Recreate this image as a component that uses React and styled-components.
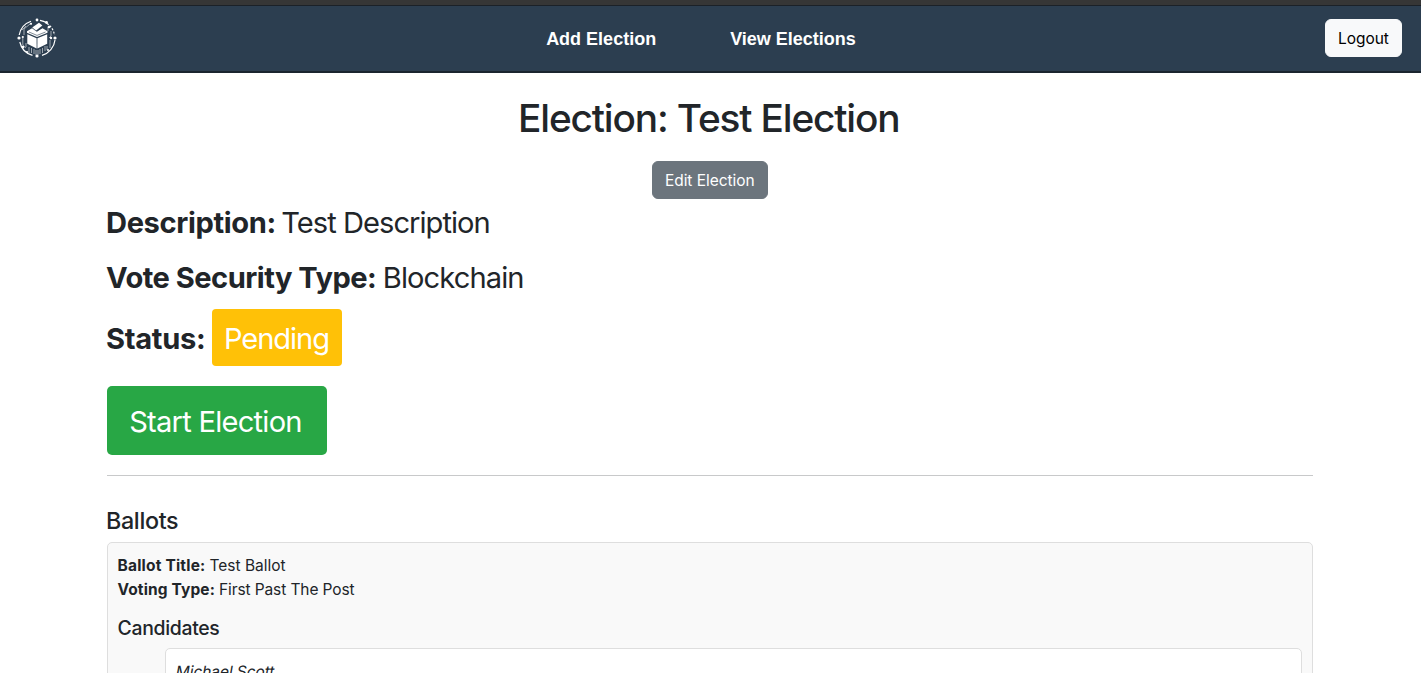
import React from "react";
import styled, { createGlobalStyle } from "styled-components";

const GlobalStyle = createGlobalStyle`
  *, *::before, *::after { box-sizing: border-box; }
  html, body { margin: 0; padding: 0; }
  body {
    height: 673px;
    overflow: hidden;
    background: #fff;
    color: #212529;
    font-family: Inter, "Liberation Sans", sans-serif;
    font-size: 15.5px;
    line-height: 24px;
    white-space: nowrap;
  }
`;

const Page = styled.div`
  height: 673px;
  overflow: hidden;
`;

const TopStrip = styled.div`
  height: 6px;
  background: #363636;
  border-bottom: 1px solid #1b2128;
`;

const NavBar = styled.nav`
  display: grid;
  grid-template-columns: 1fr auto 1fr;
  align-items: center;
  height: 67px;
  padding: 0 19px 2px 17px;
  background: #2c3e50;
  border-bottom: 2px solid #1a252f;
`;

const NavLinks = styled.div`
  display: flex;
  gap: 74px;
  padding-top: 3px;
  margin-right: 17px;
`;

const NavLink = styled.a`
  color: #fff;
  font: bold 18px/27px "Liberation Sans", Arial, sans-serif;
`;

const Button = styled.button`
  width: ${(p) => p.$width};
  height: 38px;
  padding: 2px 0 0;
  justify-self: end;
  border: 1px solid ${(p) => p.$bg};
  border-radius: 6px;
  background: ${(p) => p.$bg};
  color: ${(p) => p.$color};
  font: 400 15.5px/24px Inter, sans-serif;
  letter-spacing: -0.05px;
`;

const LogoSvg = styled.svg`
  display: block;
  width: 40px;
  height: 40px;
`;

const Content = styled.main`
  display: flex;
  flex-direction: column;
  padding: 21px 108px 0 106.5px;
`;

const Title = styled.h1`
  margin: 0 0 19px;
  padding-right: 2px;
  text-align: center;
  font-weight: 500;
  font-size: 38.8px;
  line-height: 48px;
  letter-spacing: -1.15px;
`;

const EditRow = styled.div`
  display: flex;
  justify-content: center;
`;

const Detail = styled.p`
  display: flex;
  align-items: center;
  gap: ${(p) => p.$gap || "7px"};
  margin: ${(p) => p.$margin || "0"};
  font-size: 29.1px;
  line-height: 45px;
`;

const Label = styled.strong`
  margin-left: -0.5px;
  padding-top: ${(p) => p.$drop || "0"};
  font-weight: 700;
  letter-spacing: ${(p) => p.$track || "0"};
`;

const Value = styled.span`
  letter-spacing: ${(p) => p.$track || "0"};
`;

const Badge = styled.span`
  width: 130px;
  height: 57px;
  margin-left: -0.5px;
  padding: 7px 0 0 12px;
  border-radius: 4px;
  background: #ffc107;
  color: #fff;
  letter-spacing: -1.05px;
`;

const StartButton = styled.button`
  width: 220px;
  height: 69px;
  margin-top: 20px;
  padding: 2px 2px 0 0;
  border: 0;
  border-radius: 5px;
  background: #28a745;
  color: #fff;
  font: 400 29.1px/45px Inter, sans-serif;
  letter-spacing: -0.75px;
`;

const Divider = styled.hr`
  width: 100%;
  height: 1px;
  margin: 20px 0 30px;
  border: 0;
  background: #c8c9ca;
`;

const SectionTitle = styled.h2`
  margin: 0 0 7px -0.5px;
  font-weight: 500;
  font-size: 23.3px;
  line-height: 29px;
  letter-spacing: -0.33px;
`;

const BallotCard = styled.section`
  height: 300px;
  padding: 11px 10px 10px;
  border: 1px solid #dedede;
  border-radius: 5px;
  background: #f9f9f9;
`;

const BallotLine = styled.div`
  display: flex;
  gap: 4px;
  height: 24px;
  padding-left: 0.5px;
`;

const CandidatesTitle = styled.h3`
  margin: 14px 0 8px;
  font-weight: 500;
  font-size: 19.4px;
  line-height: 24px;
  letter-spacing: -0.3px;
`;

const Candidate = styled.div`
  height: 90px;
  margin-left: 47px;
  padding: 11px 10px 10px;
  border: 1px solid #dedede;
  border-radius: 5px;
  background: #fff;
`;

const CandidateName = styled.span`
  display: inline-block;
  transform: skewX(-10deg);
  letter-spacing: -0.08px;
`;

function Logo() {
  return (
    <LogoSvg viewBox="0 0 40 40" fill="none" stroke="#fff">
      <g strokeWidth="1.2">
        <path d="M2.2 17A18 18 0 0 1 14 3.2M23 2.4A18 18 0 0 1 30 5M38 22A18 18 0 0 1 25 37.4M2.8 24A18 18 0 0 0 15.5 37.4" />
        <path d="M30 5.5A17 17 0 0 1 37.5 17" strokeDasharray="2 1.5" />
      </g>
      <g strokeWidth=".8" opacity=".7">
        <path d="M5.8 20v7l3 3M7 17V11l6-5M31 9v4M34 13v5l-2 2M33 30v-8M30 32v-4M12 29v6M14.5 30v5M17 31v5M19 32v5M21 32v5M23 31v5M25.5 30v5M28 28v5M9 25v4M5 12l4-4" />
      </g>
      <g fill="#fff" stroke="none">
        <circle cx="2" cy="20" r="1.6" />
        <circle cx="20" cy="2" r="1.4" />
        <circle cx="29.5" cy="4.5" r="1.4" />
        <circle cx="38" cy="20" r="1.6" />
        <circle cx="20" cy="38" r="1.6" />
        <circle cx="5.8" cy="19" r="1.1" />
        <circle cx="6" cy="29" r="1.3" />
        <circle cx="10" cy="34" r="1.1" />
        <circle cx="34" cy="20" r="1.2" />
        <circle cx="32" cy="9" r="1.3" />
        <circle cx="14" cy="5.8" r="1.1" />
        <circle cx="31" cy="32" r="1" />
        <path d="M10.3 16.2l9.3 4v10.4l-9.3-4.8z" />
        <path d="M20.4 20.2l9.8-4v9.6l-9.8 4.8z" />
        <path d="M10 13.2l5.5-3.2 4.5 3.6 5.5-3.4 5 3v1.6L20 19l-10-4.2z" />
        <path d="M15.2 9.6l6.8-4.8 3.4 2.7-6.3 5z" />
      </g>
      <path d="M14.8 9.8l5 3.6 6-4.6M12 14l8 3.4 8.5-3.4" stroke="#2c3e50" strokeWidth=".6" />
    </LogoSvg>
  );
}

export default function App() {
  return (
    <Page>
      <GlobalStyle />
      <TopStrip />
      <NavBar>
        <Logo />
        <NavLinks>
          <NavLink>Add Election</NavLink>
          <NavLink>View Elections</NavLink>
        </NavLinks>
        <Button $bg="#f8f9fa" $color="#000" $width="77px">Logout</Button>
      </NavBar>
      <Content>
        <Title>Election: Test Election</Title>
        <EditRow>
          <Button $bg="#6c757d" $color="#fff" $width="116px">Edit Election</Button>
        </EditRow>
        <Detail $margin="1px 0 10px" $gap="5.5px">
          <Label $track="-0.37px">Description:</Label>
          <Value $track="-0.97px">Test Description</Value>
        </Detail>
        <Detail $margin="0 0 9px" $gap="6.5px">
          <Label $track="-0.52px">Vote Security Type:</Label>
          <Value $track="-0.9px">Blockchain</Value>
        </Detail>
        <Detail>
          <Label $track="-0.3px" $drop="2px">Status:</Label>
          <Badge>Pending</Badge>
        </Detail>
        <StartButton>Start Election</StartButton>
        <Divider />
        <SectionTitle>Ballots</SectionTitle>
        <BallotCard>
          <BallotLine>
            <Label $track="0.2px">Ballot Title:</Label>
            <Value>Test Ballot</Value>
          </BallotLine>
          <BallotLine>
            <Label $track="0.12px">Voting Type:</Label>
            <Value $track="-0.1px">First Past The Post</Value>
          </BallotLine>
          <CandidatesTitle>Candidates</CandidatesTitle>
          <Candidate>
            <CandidateName>Michael Scott</CandidateName>
          </Candidate>
        </BallotCard>
      </Content>
    </Page>
  );
}
